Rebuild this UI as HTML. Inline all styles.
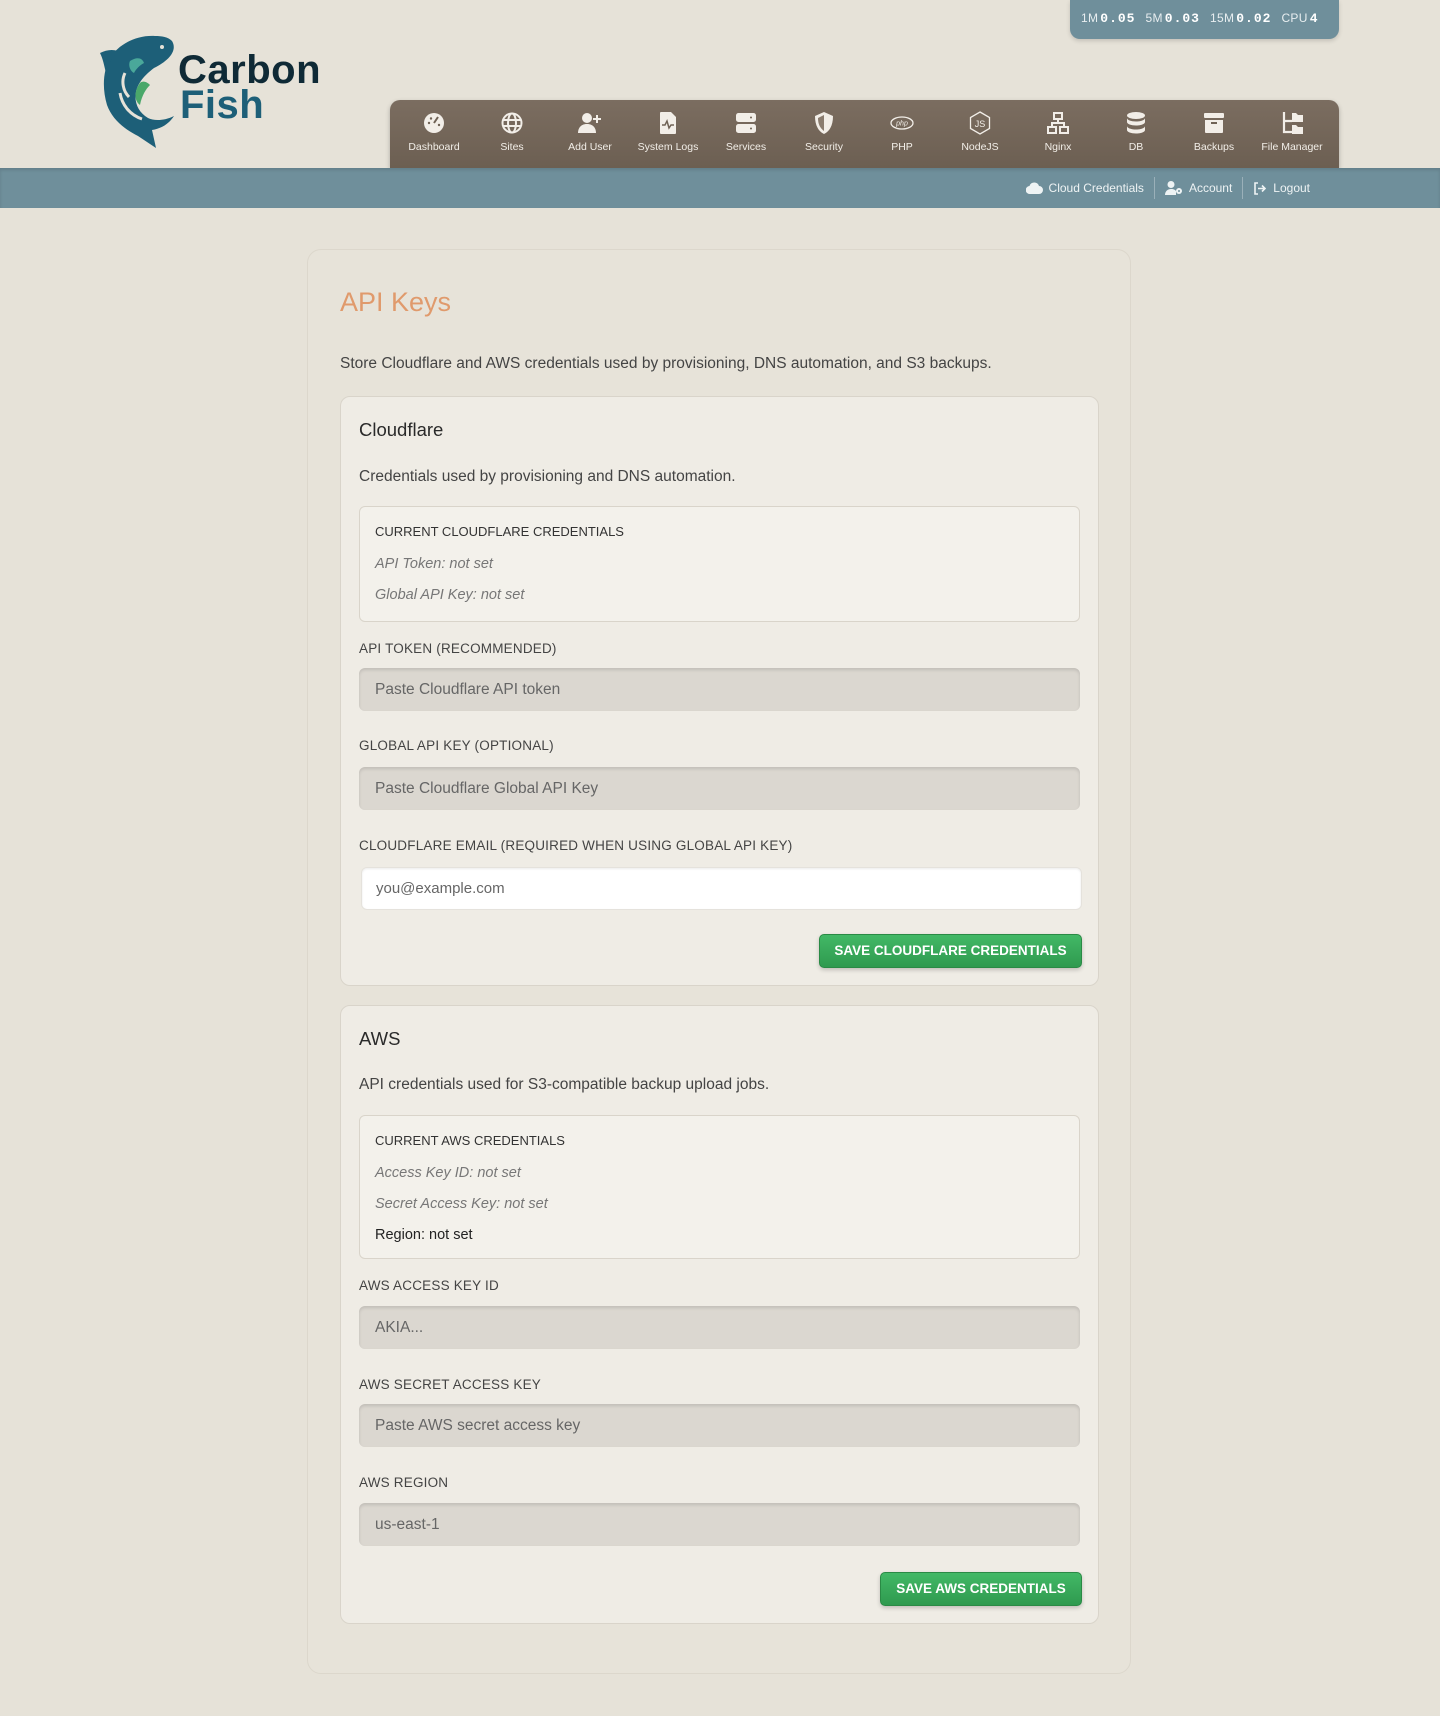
<!DOCTYPE html>
<html><head><meta charset="utf-8"><style>
*{box-sizing:border-box;margin:0;padding:0}
body{width:1440px;height:1716px;background:#e6e2d8;font-family:"Liberation Sans",sans-serif;position:relative;overflow:hidden;color:#333}
.abs{position:absolute}
.stats{left:1070px;top:0;width:269px;height:39px;background:#6f8f9b;border-radius:0 0 10px 10px;color:#e8eef0;font-size:12px;line-height:37px;padding-left:11px;box-shadow:0 2px 4px rgba(0,0,0,.15);letter-spacing:.3px}
.stats b{font-family:"Liberation Mono",monospace;font-size:13px;color:#fff;margin-right:10px;margin-left:2px;letter-spacing:1px}
.nav{left:390px;top:100px;width:949px;height:68px;background:linear-gradient(#7b6d60,#6c5f52);border-radius:10px 10px 0 0;box-shadow:0 2px 5px rgba(0,0,0,.25)}
.nav .it{position:absolute;top:0;width:78px;text-align:center;color:#f2eee8;font-size:10.5px}
.nav .it svg{display:block;margin:11px auto 0;width:24px;height:24px}
.nav .it span{display:block;margin-top:6px}
.bar{left:0;top:168px;width:1440px;height:40px;background:#6f8f9b;box-shadow:inset 0 2px 3px rgba(0,0,0,.12)}
.bar .links{position:absolute;right:120px;top:0;height:40px;display:flex;align-items:center;color:#eef3f4;font-size:12px}
.bar .links div{display:flex;align-items:center;padding:0 10px;border-left:1px solid rgba(255,255,255,.3);height:22px}
.bar .links div:first-child{border:none}
.bar .links svg{margin-right:6px}
.main{left:307px;top:249px;width:824px;height:1425px;background:#e7e3d9;border:1px solid #dcd7cc;border-radius:14px}
h1{position:absolute;left:340px;top:287px;font-weight:normal;font-size:27px;color:#e09a6c}
.desc{position:absolute;left:340px;top:355px;font-size:15.5px;color:#444}
.card{position:absolute;left:340px;width:759px;background:#efece5;border:1px solid #d9d4ca;border-radius:10px}
.card h2{position:absolute;left:18px;font-size:18.5px;font-weight:normal;color:#2a2a2a}
.card .sub{position:absolute;left:18px;font-size:15.5px;color:#444}
.cur{position:absolute;left:18px;width:721px;background:#f3f1eb;border:1px solid #d9d4ca;border-radius:6px}
.cur .t{position:absolute;left:15px;font-size:13px;color:#333}
.cur .i{position:absolute;left:15px;font-size:14.5px;font-style:italic;color:#777}
.lbl{position:absolute;left:18px;font-size:13.5px;color:#444;letter-spacing:.2px}
.inp{position:absolute;left:18px;width:721px;height:43px;background:#dbd7d0;border-radius:6px;box-shadow:inset 0 2px 3px rgba(0,0,0,.12);font-size:15.5px;color:#666;padding-left:16px;line-height:43px}
.inp.w{background:#fff;left:20px;width:721px;box-shadow:inset 0 1px 2px rgba(0,0,0,.08);border:1px solid #e5e2dc;line-height:41px;font-size:15px;padding-left:14px}
.btn{position:absolute;height:34px;background:linear-gradient(#42b866,#2f9a4f);border:1px solid #2a8a45;border-radius:5px;color:#fff;font-size:13.5px;font-weight:bold;text-align:center;line-height:32px;box-shadow:0 2px 4px rgba(0,0,0,.2)}
</style></head><body>
<div class="abs stats">1M<b>0.05</b>5M<b>0.03</b>15M<b>0.02</b>CPU<b>4</b></div>

<svg class="abs" style="left:100px;top:33px" width="85" height="117" viewBox="0 0 85 117">
<path d="M55 3C35 2 18 12 10 25 3 38 2 55 7 72 12 86 24 96 38 103l18 12-4-18c12-2 18-8 22-14-10 5-20 5-26 2-10-6-14-16-12-26 2-10 10-18 18-24C68 28 78 18 72 8 68 4 62 3 55 3z" fill="#1d5f78"/>
<path d="M0 20c6-3 12-4 18-2-6 6-10 14-12 22-2-8-3-14-6-20z" fill="#1d5f78"/>
<path d="M40 50c-6 8-6 18 0 22 2-10 6-16 10-20-4-4-8-4-10-2z" fill="#4aa86a"/>
<path d="M30 28c6-4 12-4 14 2-4 2-8 6-10 10-4-2-6-8-4-12z" fill="#4aa89a"/>
<circle cx="62" cy="14" r="2" fill="#e6e2d8"/>
<path d="M25 40c-4 8-2 18 4 24M20 60c2 12 10 22 22 26" stroke="#e6e2d8" stroke-width="3" fill="none"/>
</svg>
<div class="abs" style="left:178px;top:52px;font-size:40px;font-weight:bold;color:#0f2a36;line-height:36px;letter-spacing:.5px">Carbon</div>
<div class="abs" style="left:180px;top:87px;font-size:40px;font-weight:bold;color:#1d5f78;line-height:36px;letter-spacing:.5px">Fish</div>

<div class="abs nav">
<div class="it" style="left:5px"><svg viewBox="0 0 24 24"><circle cx="12" cy="12" r="10" fill="#f2eee8"/><path d="M12 12l4-6" stroke="#6f6255" stroke-width="2"/><circle cx="7" cy="12" r="1.2" fill="#6f6255"/><circle cx="9" cy="7.5" r="1.2" fill="#6f6255"/><circle cx="17" cy="14" r="1.2" fill="#6f6255"/></svg><span>Dashboard</span></div>
<div class="it" style="left:83px"><svg viewBox="0 0 24 24" fill="none" stroke="#f2eee8" stroke-width="2"><circle cx="12" cy="12" r="9.5"/><ellipse cx="12" cy="12" rx="4" ry="9.5"/><path d="M3 9h18M3 15h18"/></svg><span>Sites</span></div>
<div class="it" style="left:161px"><svg viewBox="0 0 24 24" fill="#f2eee8"><circle cx="9" cy="7" r="5"/><path d="M0 22c0-6 4-9 9-9s9 3 9 9z"/><path d="M19 4v8M15 8h8" stroke="#f2eee8" stroke-width="2"/></svg><span>Add User</span></div>
<div class="it" style="left:239px"><svg viewBox="0 0 24 24"><path d="M5 1h10l5 5v16a1 1 0 0 1-1 1H5a1 1 0 0 1-1-1V2a1 1 0 0 1 1-1z" fill="#f2eee8"/><path d="M6 14h3l2-4 2 7 2-3h3" stroke="#6f6255" stroke-width="1.5" fill="none"/></svg><span>System Logs</span></div>
<div class="it" style="left:317px"><svg viewBox="0 0 24 24" fill="#f2eee8"><rect x="2" y="2" width="20" height="9" rx="2.5"/><rect x="2" y="13" width="20" height="9" rx="2.5"/><circle cx="17" cy="6.5" r="1" fill="#6f6255"/><circle cx="17" cy="17.5" r="1" fill="#6f6255"/></svg><span>Services</span></div>
<div class="it" style="left:395px"><svg viewBox="0 0 24 24"><path d="M12 1l9 4c0 9-3 15-9 18C6 20 3 14 3 5z" fill="#f2eee8"/><path d="M12 4v16c-4-3-6-7-6-13z" fill="#8a7c6f"/></svg><span>Security</span></div>
<div class="it" style="left:473px"><svg viewBox="0 0 24 24"><ellipse cx="12" cy="12" rx="11" ry="6" fill="none" stroke="#f2eee8" stroke-width="1.3"/><text x="12" y="14.5" font-size="7" font-style="italic" fill="#f2eee8" text-anchor="middle" font-family="Liberation Sans">php</text></svg><span>PHP</span></div>
<div class="it" style="left:551px"><svg viewBox="0 0 24 24"><path d="M12 1l9.5 5.5v11L12 23l-9.5-5.5v-11z" fill="none" stroke="#f2eee8" stroke-width="1.3"/><text x="12" y="16" font-size="9" fill="#f2eee8" text-anchor="middle" font-family="Liberation Sans">JS</text></svg><span>NodeJS</span></div>
<div class="it" style="left:629px"><svg viewBox="0 0 24 24" fill="none" stroke="#f2eee8" stroke-width="2"><rect x="8" y="2" width="8" height="6"/><rect x="2" y="16" width="8" height="6"/><rect x="14" y="16" width="8" height="6"/><path d="M12 8v4M6 16v-4h12v4"/></svg><span>Nginx</span></div>
<div class="it" style="left:707px"><svg viewBox="0 0 24 24" fill="#f2eee8"><ellipse cx="12" cy="4.5" rx="9" ry="3.5"/><path d="M3 7c0 2 4 3.5 9 3.5S21 9 21 7v4c0 2-4 3.5-9 3.5S3 13 3 11z"/><path d="M3 15c0 2 4 3.5 9 3.5S21 17 21 15v4c0 2-4 3.5-9 3.5S3 21 3 19z"/></svg><span>DB</span></div>
<div class="it" style="left:785px"><svg viewBox="0 0 24 24" fill="#f2eee8"><rect x="2" y="2" width="20" height="5" rx="1"/><path d="M3 9h18v12a1 1 0 0 1-1 1H4a1 1 0 0 1-1-1z"/><path d="M9 12h6" stroke="#6f6255" stroke-width="2"/></svg><span>Backups</span></div>
<div class="it" style="left:863px"><svg viewBox="0 0 24 24"><path d="M4 1v20h8M4 10h8" stroke="#f2eee8" stroke-width="2.2" fill="none"/><path d="M12 2h4l2 2h5v7H12z" fill="#f2eee8"/><path d="M12 14h4l2 2h5v7H12z" fill="#f2eee8"/></svg><span>File Manager</span></div>
</div>

<div class="abs bar"><div class="links">
<div><svg width="17" height="12" viewBox="0 0 17 12"><path d="M4 12a4 4 0 0 1-.5-8A5 5 0 0 1 13 4a4 4 0 0 1 0 8z" fill="#eef3f4"/></svg>Cloud Credentials</div>
<div><svg width="18" height="14" viewBox="0 0 18 14" fill="#eef3f4"><circle cx="6" cy="3.5" r="3.5"/><path d="M0 14c0-4 3-6 6-6s4 1 5 2v4z"/><circle cx="14" cy="10" r="3"/><circle cx="14" cy="10" r="1" fill="#6f8f9b"/></svg>Account</div>
<div><svg width="14" height="13" viewBox="0 0 14 13" fill="none" stroke="#eef3f4" stroke-width="1.6"><path d="M5 1H2v11h3"/><path d="M5 6.5h7M9 3.5l3 3-3 3"/></svg>Logout</div>
</div></div>

<div class="abs main"></div>
<h1>API Keys</h1>
<div class="desc">Store Cloudflare and AWS credentials used by provisioning, DNS automation, and S3 backups.</div>

<div class="card" style="top:396px;height:590px">
<h2 style="top:22px">Cloudflare</h2>
<div class="sub" style="top:71px">Credentials used by provisioning and DNS automation.</div>
<div class="cur" style="top:109px;height:116px">
<div class="t" style="top:17px">CURRENT CLOUDFLARE CREDENTIALS</div>
<div class="i" style="top:49px">API Token: not set</div>
<div class="i" style="top:80px">Global API Key: not set</div>
</div>
<div class="lbl" style="top:244px">API TOKEN (RECOMMENDED)</div>
<div class="inp" style="top:271px">Paste Cloudflare API token</div>
<div class="lbl" style="top:341px">GLOBAL API KEY (OPTIONAL)</div>
<div class="inp" style="top:370px">Paste Cloudflare Global API Key</div>
<div class="lbl" style="top:441px">CLOUDFLARE EMAIL (REQUIRED WHEN USING GLOBAL API KEY)</div>
<div class="inp w" style="top:470px">you@example.com</div>
<div class="btn" style="left:478px;top:537px;width:263px">SAVE CLOUDFLARE CREDENTIALS</div>
</div>

<div class="card" style="top:1005px;height:619px">
<h2 style="top:22px">AWS</h2>
<div class="sub" style="top:70px">API credentials used for S3-compatible backup upload jobs.</div>
<div class="cur" style="top:109px;height:144px">
<div class="t" style="top:17px">CURRENT AWS CREDENTIALS</div>
<div class="i" style="top:49px">Access Key ID: not set</div>
<div class="i" style="top:80px">Secret Access Key: not set</div>
<div class="i" style="top:111px;font-style:normal;color:#222">Region: not set</div>
</div>
<div class="lbl" style="top:272px">AWS ACCESS KEY ID</div>
<div class="inp" style="top:300px">AKIA...</div>
<div class="lbl" style="top:371px">AWS SECRET ACCESS KEY</div>
<div class="inp" style="top:398px">Paste AWS secret access key</div>
<div class="lbl" style="top:469px">AWS REGION</div>
<div class="inp" style="top:497px">us-east-1</div>
<div class="btn" style="left:539px;top:566px;width:202px">SAVE AWS CREDENTIALS</div>
</div>
</body></html>
